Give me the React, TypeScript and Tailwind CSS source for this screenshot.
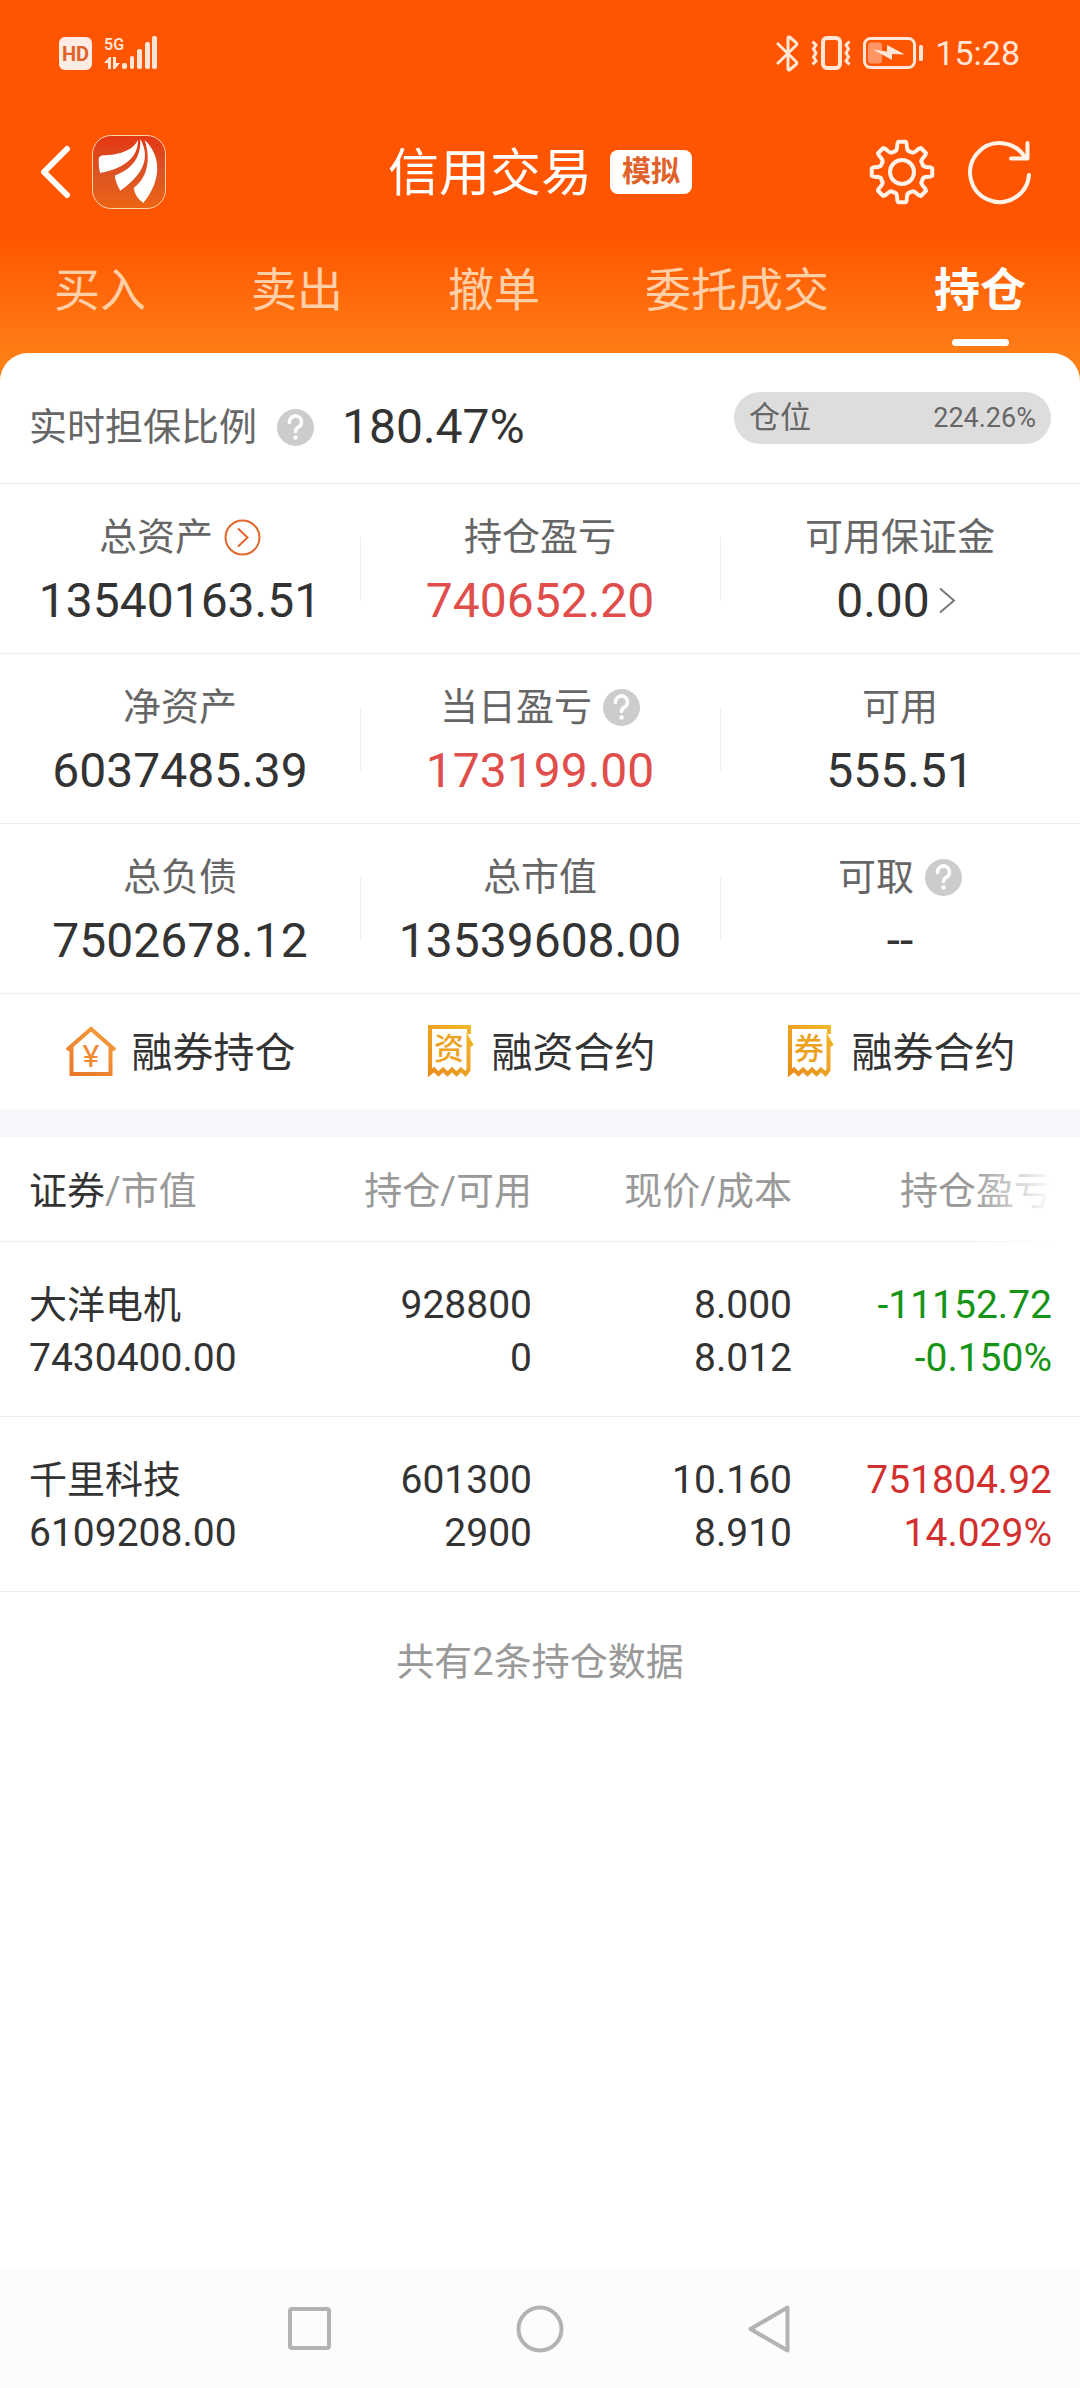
import { useState } from "react";
import type { ReactNode } from "react";
import clsx from "clsx";

const TABS = ["买入", "卖出", "撤单", "委托成交", "持仓"];

type Stat = {
  label: string;
  value: string;
  red?: boolean;
  help?: boolean;
  detail?: boolean;
  link?: boolean;
};

const STATS: Stat[][] = [
  [
    { label: "总资产", value: "13540163.51", detail: true },
    { label: "持仓盈亏", value: "740652.20", red: true },
    { label: "可用保证金", value: "0.00", link: true },
  ],
  [
    { label: "净资产", value: "6037485.39" },
    { label: "当日盈亏", value: "173199.00", red: true, help: true },
    { label: "可用", value: "555.51" },
  ],
  [
    { label: "总负债", value: "7502678.12" },
    { label: "总市值", value: "13539608.00" },
    { label: "可取", value: "--", help: true },
  ],
];

const HOLDINGS = [
  {
    name: "大洋电机",
    marketValue: "7430400.00",
    amount: "928800",
    available: "0",
    price: "8.000",
    cost: "8.012",
    profit: "-11152.72",
    percent: "-0.150%",
  },
  {
    name: "千里科技",
    marketValue: "6109208.00",
    amount: "601300",
    available: "2900",
    price: "10.160",
    cost: "8.910",
    profit: "751804.92",
    percent: "14.029%",
  },
];

function polar(r: number, deg: number) {
  const a = (deg * Math.PI) / 180;
  return `${(33 + r * Math.sin(a)).toFixed(2)} ${(33 - r * Math.cos(a)).toFixed(2)}`;
}

// eight narrow teeth joined by rounded valleys
const GEAR_PATH =
  [0, 45, 90, 135, 180, 225, 270, 315]
    .map(
      (t, i) =>
        `${i === 0 ? "M" : "L"}${polar(30.5, t - 7)} L${polar(30.5, t + 7)} Q${polar(29, t + 10)} ${polar(25.5, t + 11)} Q${polar(21, t + 14)} ${polar(22, t + 22.5)} Q${polar(21, t + 31)} ${polar(25.5, t + 34)} Q${polar(29, t + 35)} ${polar(30.5, t + 38)}`
    )
    .join(" ") + "Z";

function StatusBar() {
  return (
    <div className="flex h-[106px] items-center justify-between pl-[59px] pr-[60px] text-[#ffe6d6]">
      <div className="flex items-center gap-3">
        <svg width="33" height="33" viewBox="0 0 33 33">
          <rect width="33" height="33" rx="6" fill="#ffece2" />
          <text x="16.5" y="24" textAnchor="middle" fontSize="20" fontWeight="700" fill="#e0622a" fontFamily="Roboto">
            HD
          </text>
        </svg>
        <svg width="54" height="34" viewBox="0 0 54 34" fill="currentColor" className="overflow-visible">
          <text x="0" y="14" fontSize="16" fontWeight="600" fontFamily="Roboto">
            5G
          </text>
          <path d="M0 27 5.500 21H7V33H4V27ZM9 21h3v6h4L11 33H9Z" />
          <rect x="18" y="27" width="5" height="6" rx="2" />
          <rect x="26" y="20" width="4" height="13" rx="2" />
          <rect x="33" y="13" width="5" height="20" rx="2" />
          <rect x="41" y="6" width="5" height="27" rx="2" />
          <rect x="48" y="0" width="5" height="33" rx="2" />
        </svg>
      </div>
      <div className="flex items-center gap-3">
        <svg width="23" height="37" viewBox="0 0 23 37" fill="none" stroke="currentColor" strokeWidth="3" strokeLinejoin="round">
          <path d="M1 8 20 26.500Q21.500 28 20 29.500L13.500 35Q12 35.500 12 33.500V3.500Q12 1.500 13.500 2L20 7.500Q21.500 9 20 10.500L1 29" />
        </svg>
        <svg width="40" height="34" viewBox="0 0 40 34" fill="none" stroke="currentColor">
          <rect x="12" y="2" width="17" height="30" rx="4" strokeWidth="4" />
          <path d="M1.500 5.500 5 9 2.500 13 5 17 2.500 21 5 25 1.500 28.500M38.500 5.500 35 9 37.500 13 35 17 37.500 21 35 25 38.500 28.500" strokeWidth="3" />
        </svg>
        <svg width="60" height="32" viewBox="0 0 60 32">
          <rect x="1.500" y="1.500" width="50" height="29" rx="6" fill="none" stroke="currentColor" strokeWidth="3" />
          <rect x="5" y="5.500" width="14" height="21" rx="3" fill="#ff9663" />
          <path d="M10 12.500 24 14.500V8L42 17.500 29 17V23Z" fill="currentColor" />
          <rect x="56" y="8" width="4" height="16" rx="1.500" fill="currentColor" />
        </svg>
        <span className="text-[34px] leading-10">15:28</span>
      </div>
    </div>
  );
}

function BrandLogo() {
  return (
    <svg width="74" height="74" viewBox="0 0 222 222">
      <defs>
        <linearGradient id="brand" x1="0" y1="0" x2="0" y2="1">
          <stop offset="0" stopColor="#e43713" />
          <stop offset="0.500" stopColor="#dc5325" />
          <stop offset="1" stopColor="#ec6413" />
        </linearGradient>
      </defs>
      <rect x="1.500" y="1.500" width="219" height="219" rx="56" fill="url(#brand)" stroke="#ffd2ac" strokeWidth="3" />
      <g fill="#fff">
        <path d="M20 74Q21 62 33 61C78 60 124 47 138 14C139 62 104 98 24 114Q19 92 20 74Z" />
        <path d="M145 12C172 60 164 112 85 167Q71 144 68 122C112 104 147 78 145 12Z" />
        <path d="M158 15C208 62 210 136 154 204Q130 188 125 159C160 132 180 84 158 15Z" />
      </g>
    </svg>
  );
}

function HelpIcon() {
  return (
    <svg width="37" height="37" viewBox="0 0 37 37" fill="none">
      <circle cx="18.500" cy="18.500" r="18.500" fill="#ccc" />
      <path d="M12.500 13.500A6 6 0 1 1 22 17.800Q18.500 19.800 18.500 22.500" stroke="#fff" strokeWidth="3.500" strokeLinecap="round" />
      <circle cx="18.500" cy="28.500" r="2.200" fill="#fff" />
    </svg>
  );
}

function StatCell({ stat }: { stat: Stat }) {
  return (
    <div className="flex flex-col items-center gap-[14px] pt-[31px] pb-6">
      <div className="flex h-11 items-center gap-[11px]">
        <span className="text-[38px] leading-[44px] text-[#666]">{stat.label}</span>
        {stat.detail && (
          <button type="button" aria-label="总资产明细">
            <svg width="37" height="37" viewBox="0 0 37 37" fill="none" stroke="#e0662a" strokeWidth="2">
              <circle cx="18.500" cy="18.500" r="17" />
              <path d="M14 9.500 23.500 18.500 14 27.500" />
            </svg>
          </button>
        )}
        {stat.help && (
          <button type="button" aria-label={`${stat.label}说明`}>
            <HelpIcon />
          </button>
        )}
      </div>
      <div className="flex h-14 items-center gap-2">
        <span className={clsx("text-[48px] leading-[56px]", stat.red ? "text-[#e04e4c]" : "text-[#333]")}>
          {stat.value}
        </span>
        {stat.link && (
          <svg width="26" height="28" viewBox="0 0 26 28" fill="none" stroke="#777" strokeWidth="2">
            <path d="M2 1.500 16 13.500 2 25.500" />
          </svg>
        )}
      </div>
    </div>
  );
}

function HouseIcon() {
  return (
    <svg width="52" height="52" viewBox="0 0 52 52" fill="none">
      <defs>
        <linearGradient id="house" x1="0" y1="1" x2="0.700" y2="0">
          <stop offset="0" stopColor="#e8762a" />
          <stop offset="1" stopColor="#f59a3a" />
        </linearGradient>
      </defs>
      <path d="M2 25 26 4 50 25M6.500 22V49H45.500V22" stroke="url(#house)" strokeWidth="4" />
      <text x="26" y="42" textAnchor="middle" fontSize="32" fill="#f08a35" fontFamily="Roboto">
        ¥
      </text>
    </svg>
  );
}

function ReceiptIcon({ char }: { char: string }) {
  return (
    <svg width="52" height="52" viewBox="0 0 52 52" fill="none">
      <defs>
        <linearGradient id="receipt" x1="0" y1="1" x2="1" y2="0">
          <stop offset="0" stopColor="#e98c1c" />
          <stop offset="1" stopColor="#f3b829" />
        </linearGradient>
      </defs>
      <path
        d="M44 9V2H5V48L9 44.500 13.500 49 18 44.500 22.500 49 27 44.500 31.500 49 36 44.500 40.500 49 43.500 45V15L47 21"
        stroke="url(#receipt)"
        strokeWidth="4"
      />
      <text x="24" y="34" textAnchor="middle" fontSize="30" fontWeight="500" fill="#eda21f" fontFamily="'Noto Sans CJK SC'">
        {char}
      </text>
    </svg>
  );
}

function Action({ icon, label }: { icon: ReactNode; label: string }) {
  return (
    <button type="button" className="flex flex-1 items-center justify-center gap-[15px] text-[41px] leading-[48px] text-[#333]">
      {icon}
      <span className="pt-1">{label}</span>
    </button>
  );
}

export default function App() {
  const [tab, setTab] = useState("持仓");

  return (
    <div className="flex min-h-screen flex-col bg-white font-[Roboto,'Noto_Sans_CJK_SC',sans-serif]">
      <header className="bg-[#ff5500]">
        <StatusBar />
        <div className="grid h-[132px] grid-cols-[1fr_auto_1fr] items-center">
          <div className="flex items-center gap-[22px] pl-10">
            <button type="button" aria-label="返回">
              <svg width="30" height="54" viewBox="0 0 30 54" fill="none" stroke="#fff" strokeWidth="6" strokeLinecap="round" strokeLinejoin="round">
                <path d="M27 4 4 27 27 50" />
              </svg>
            </button>
            <BrandLogo />
          </div>
          <div className="flex items-center gap-[18px]">
            <h1 className="pt-1 text-[51px] leading-[60px] text-white">信用交易</h1>
            <span className="rounded-lg bg-white px-3 text-[29px] leading-[44px] font-bold text-[#e0622a]">模拟</span>
          </div>
          <div className="flex items-center justify-end gap-[33px] pr-12">
            <button type="button" aria-label="设置">
              <svg width="66" height="66" viewBox="0 0 66 66" fill="none" stroke="#fff3ea" strokeWidth="4" strokeLinejoin="round">
                <path d={GEAR_PATH} />
                <circle cx="33" cy="33" r="12" />
              </svg>
            </button>
            <button type="button" aria-label="刷新">
              <svg width="64" height="66" viewBox="0 0 64 66" fill="none" stroke="#fff3ea" strokeWidth="4" strokeLinecap="round" strokeLinejoin="round">
                <path d="M61 36A29.500 29.500 0 1 1 57 18.500" />
                <path d="M59.500 4V19.500H43" />
              </svg>
            </button>
          </div>
        </div>
        <nav className="flex justify-between bg-linear-to-b from-[#ff5500] to-[#ff8519] px-[54px] pt-6 pb-[35px]">
          {TABS.map((name) => (
            <button
              key={name}
              type="button"
              onClick={() => setTab(name)}
              className={clsx(
                "flex flex-col items-center gap-[21px] text-[46px] leading-[56px]",
                tab === name ? "font-bold text-white" : "text-[#ffcfa8]"
              )}
            >
              {name}
              <span className={clsx("h-[7px] w-[57px] rounded-full", tab === name && "bg-white")} />
            </button>
          ))}
        </nav>
      </header>

      <main className="-mt-7 flex-1 rounded-t-[28px] bg-white">
        <section className="flex items-start justify-between border-b border-[#eee] px-[29px] pt-[39px] pb-[21px]">
          <div className="flex h-[70px] items-center">
            <span className="text-[38px] leading-[44px] text-[#666]">实时担保比例</span>
            <button type="button" aria-label="实时担保比例说明" className="ml-5">
              <HelpIcon />
            </button>
            <span className="ml-7 text-[48px] leading-[56px] text-[#333]">180.47%</span>
          </div>
          <div className="flex h-[52px] w-[317px] items-center justify-between rounded-full bg-[#ddd] px-[15px] text-[#666]">
            <span className="text-[31px] leading-9">仓位</span>
            <span className="text-[27px] leading-9">224.26%</span>
          </div>
        </section>

        {STATS.map((row) => (
          <section key={row[0].label} className="flex items-center border-b border-[#eee]">
            {row.map((stat, i) => (
              <div key={stat.label} className="flex flex-1 basis-0 items-center">
                {i > 0 && <div className="-mr-px h-16 w-px bg-[#eee]" />}
                <div className="flex-1">
                  <StatCell stat={stat} />
                </div>
              </div>
            ))}
          </section>
        ))}

        <section className="flex items-center border-b-[28px] border-[#f6f7fa] pt-[31px] pb-[32px]">
          <Action icon={<HouseIcon />} label="融券持仓" />
          <Action icon={<ReceiptIcon char="资" />} label="融资合约" />
          <Action icon={<ReceiptIcon char="券" />} label="融券合约" />
        </section>

        <table className="w-full table-fixed text-right text-[38px]">
          <colgroup>
            <col className="w-[272px]" />
            <col className="w-[260px]" />
            <col className="w-[260px]" />
            <col />
          </colgroup>
          <thead>
            <tr className="border-b border-[#eee] leading-[44px] text-[#999]">
              <th className="pt-8 pb-7 pl-[29px] text-left font-normal whitespace-nowrap">
                <span className="text-[#333]">证券</span>/市值
              </th>
              <th className="pt-8 pb-7 font-normal">持仓/可用</th>
              <th className="pt-8 pb-7 font-normal">现价/成本</th>
              <th className="relative pt-8 pr-7 pb-7 font-normal">
                持仓盈亏
                <span className="absolute inset-y-0 right-0 -bottom-px w-[110px] bg-linear-to-r from-transparent to-white to-75%" />
              </th>
            </tr>
          </thead>
          <tbody>
            {HOLDINGS.map((h) => (
              <tr key={h.name} className="border-b border-[#eee] text-[39px] leading-[53px] text-[#333]">
                <td className="pt-[37px] pb-[31px] pl-[29px] text-left whitespace-nowrap">
                  <div className="text-[38px]">{h.name}</div>
                  <div>{h.marketValue}</div>
                </td>
                <td className="pt-[37px] pb-[31px]">
                  <div>{h.amount}</div>
                  <div>{h.available}</div>
                </td>
                <td className="pt-[37px] pb-[31px]">
                  <div>{h.price}</div>
                  <div>{h.cost}</div>
                </td>
                <td className={clsx("pt-[37px] pr-7 pb-[31px]", h.profit.startsWith("-") ? "text-[#159415]" : "text-[#d2302e]")}>
                  <div>{h.profit}</div>
                  <div>{h.percent}</div>
                </td>
              </tr>
            ))}
          </tbody>
        </table>
        <p className="pt-12 text-center text-[38px] leading-[44px] text-[#999]">共有{HOLDINGS.length}条持仓数据</p>
      </main>

      <footer className="flex h-[118px] items-center justify-center gap-[182px] bg-[#fcfcfc]">
        <button type="button" aria-label="最近任务">
          <svg width="48" height="50" viewBox="0 0 48 50" fill="none" stroke="#b3b3b3" strokeWidth="4">
            <rect x="4" y="5" width="39" height="39" rx="2" />
          </svg>
        </button>
        <button type="button" aria-label="主屏幕">
          <svg width="48" height="50" viewBox="0 0 48 50" fill="none" stroke="#b3b3b3" strokeWidth="4">
            <circle cx="24" cy="25" r="21.500" />
          </svg>
        </button>
        <button type="button" aria-label="后退">
          <svg width="48" height="50" viewBox="0 0 48 50" fill="none" stroke="#b3b3b3" strokeWidth="4" strokeLinejoin="round">
            <path d="M41.500 3.500V46.500L4.500 25Z" />
          </svg>
        </button>
      </footer>
    </div>
  );
}
